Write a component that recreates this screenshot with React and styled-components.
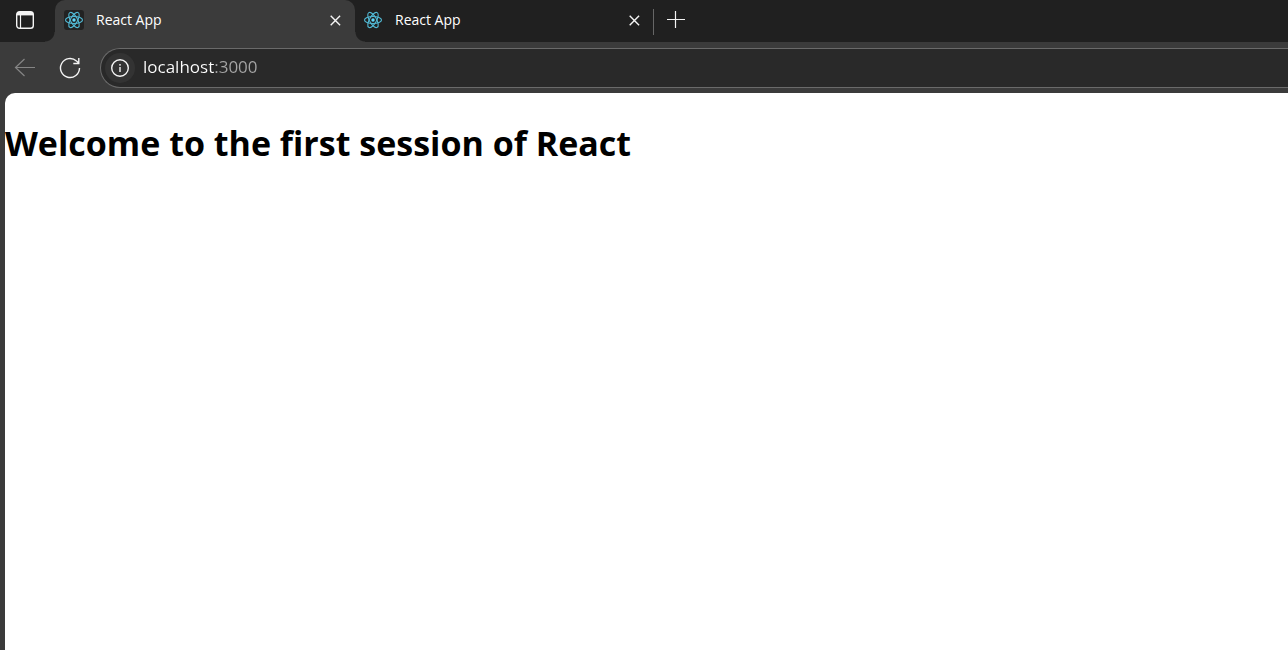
import React from "react";
import styled, { createGlobalStyle } from "styled-components";

const GlobalStyle = createGlobalStyle`
  * { box-sizing: border-box; }
  body {
    margin: 0;
    background: #3b3b3b;
    font-family: "Open Sans", "Noto Sans", sans-serif;
  }
`;

const Window = styled.div`
  display: flex;
  flex-direction: column;
  min-height: 100vh;
  overflow: hidden;
`;

const TabStrip = styled.header`
  display: flex;
  height: 42px;
  padding-left: 10px;
  background: #202020;
`;

const Tabs = styled.div`
  display: flex;
  margin-left: 15px;
`;

const IconButton = styled.button`
  display: flex;
  align-items: center;
  justify-content: center;
  flex: none;
  width: ${(p) => p.$width || 20}px;
  height: ${(p) => p.$height || 40}px;
  padding: 0;
  border: 0;
  background: ${(p) => p.$fill || "transparent"};
  border-radius: ${(p) => (p.$round ? "50%" : "0")};
  color: ${(p) => p.$color || "#f4f4f4"};
`;

const Tab = styled.div`
  position: relative;
  display: flex;
  align-items: center;
  flex: none;
  width: ${(p) => (p.$active ? 300 : 298)}px;
  height: 42px;
  padding: ${(p) => (p.$active ? "0 8px 2px 9px" : "0 7px 2px 8px")};
  border-radius: 10px 10px 0 0;
  background: ${(p) => (p.$active ? "#3b3b3b" : "transparent")};

  &::before,
  &::after {
    content: "";
    display: ${(p) => (p.$active ? "block" : "none")};
    position: absolute;
    bottom: 0;
    width: 10px;
    height: 10px;
  }
  &::before {
    right: 100%;
    background: radial-gradient(circle at 0 0, transparent 9px, #3b3b3b 10px);
  }
  &::after {
    left: 100%;
    background: radial-gradient(circle at 100% 0, transparent 9px, #3b3b3b 10px);
  }
`;

const Favicon = styled.span`
  display: flex;
  flex: none;
  width: 20px;
  height: 20px;
  border-radius: 3px;
  background: ${(p) => (p.$active ? "#222222" : "transparent")};
`;

const TabTitle = styled.span`
  flex: 1;
  margin-left: 12px;
  font-size: 14px;
  line-height: 20px;
  color: #ffffff;
`;

const Divider = styled.span`
  width: 1px;
  height: 26px;
  margin: 9px 12px 0 0;
  background: #666666;
`;

const Toolbar = styled.nav`
  display: flex;
  align-items: center;
  gap: 15px;
  height: 51px;
  padding-left: 10px;
  background: #3b3b3b;
`;

const AddressBar = styled.form`
  display: flex;
  align-items: center;
  flex: 1;
  height: 40px;
  padding-left: 4px;
  border: solid #6a6a6a;
  border-width: 1px 0 1px 1px;
  border-radius: 20px 0 0 20px;
  background: #292929;
`;

const AddressInput = styled.input`
  flex: 1;
  min-width: 0;
  height: 30px;
  margin-left: 8px;
  padding: 0 0 2px;
  border: 0;
  outline: 0;
  font: 17px/28px "Open Sans", "Noto Sans", sans-serif;
  color: transparent;
  background: linear-gradient(to right, #ffffff 72px, #a6a6a6 72px);
  background-clip: text;
  -webkit-background-clip: text;
`;

const Page = styled.main`
  flex: 1;
  margin-left: 5px;
  border-top-left-radius: 10px;
  background: #ffffff;
`;

const Heading = styled.h1`
  margin: 26px 0;
  font-size: 34px;
  line-height: 48px;
  font-weight: 700;
  color: #000000;
`;

const ReactIcon = () => (
  <svg width="20" height="20" viewBox="0 0 20 20" fill="none" stroke="#52b9d4" strokeWidth="1.1" aria-hidden="true">
    <ellipse cx="10" cy="10" rx="8.5" ry="3.5" />
    <ellipse cx="10" cy="10" rx="8.5" ry="3.5" transform="rotate(60 10 10)" />
    <ellipse cx="10" cy="10" rx="8.5" ry="3.5" transform="rotate(120 10 10)" />
    <circle cx="10" cy="10" r="1.7" fill="#61dafb" stroke="none" />
  </svg>
);

const CloseIcon = () => (
  <svg width="20" height="20" viewBox="0 0 20 20" fill="none" stroke="currentColor" strokeWidth="1.4" aria-hidden="true">
    <path d="M5.7 5.8l9.4 9.4M15.1 5.8l-9.4 9.4" />
  </svg>
);

const PanelIcon = () => (
  <svg width="20" height="20" viewBox="0 0 20 20" fill="none" stroke="currentColor" aria-hidden="true">
    <rect x="1.7" y="1.7" width="16.6" height="16.6" rx="2.8" strokeWidth="1.4" />
    <path d="M2 3.7h16" strokeWidth="3.4" />
    <path d="M5.5 5v13" strokeWidth="1.2" />
  </svg>
);

const PlusIcon = () => (
  <svg width="20" height="20" viewBox="0 0 20 20" fill="none" stroke="currentColor" strokeWidth="1.2" aria-hidden="true">
    <path d="M1 9.5h18M9.5 1v17" />
  </svg>
);

const BackIcon = () => (
  <svg width="22" height="22" viewBox="0 0 22 22" fill="none" stroke="currentColor" strokeWidth="1.2" aria-hidden="true">
    <path d="M21 10.5H1.5M10.5 2L1.5 10.5l9 8.5" />
  </svg>
);

const ReloadIcon = () => (
  <svg width="22" height="22" viewBox="0 0 22 22" fill="none" stroke="currentColor" strokeWidth="1.4" aria-hidden="true">
    <path d="M20.5 11a9.5 9.5 0 1 1-3-6.9L20 6.3M19.8 1v5.5h-5.5" />
  </svg>
);

const InfoIcon = () => (
  <svg width="20" height="20" viewBox="0 0 20 20" fill="none" stroke="currentColor" aria-hidden="true">
    <circle cx="10" cy="10" r="8.3" strokeWidth="1.4" />
    <path d="M10 9v5" strokeWidth="1.4" />
    <circle cx="10" cy="6.8" r="0.9" fill="currentColor" stroke="none" />
  </svg>
);

const BrowserTab = ({ active, title }) => (
  <Tab $active={active}>
    <Favicon $active={active}>
      <ReactIcon />
    </Favicon>
    <TabTitle>{title}</TabTitle>
    <IconButton type="button" aria-label="Close tab" $width={24}>
      <CloseIcon />
    </IconButton>
  </Tab>
);

export default function App() {
  return (
    <>
      <GlobalStyle />
      <Window>
        <TabStrip>
          <IconButton type="button" aria-label="Tab actions" $width={30}>
            <PanelIcon />
          </IconButton>
          <Tabs>
            <BrowserTab active title="React App" />
            <BrowserTab title="React App" />
          </Tabs>
          <Divider />
          <IconButton type="button" aria-label="New tab" $width={20}>
            <PlusIcon />
          </IconButton>
        </TabStrip>
        <Toolbar aria-label="Navigation">
          <IconButton type="button" aria-label="Back" $width={30} $color="#858585">
            <BackIcon />
          </IconButton>
          <IconButton type="button" aria-label="Reload" $width={30}>
            <ReloadIcon />
          </IconButton>
          <AddressBar onSubmit={(e) => e.preventDefault()}>
            <IconButton type="button" aria-label="Site information" $width={30} $height={30} $round $fill="#333333">
              <InfoIcon />
            </IconButton>
            <AddressInput aria-label="Address" defaultValue="localhost:3000" spellCheck={false} />
          </AddressBar>
        </Toolbar>
        <Page>
          <Heading>Welcome to the first session of React</Heading>
        </Page>
      </Window>
    </>
  );
}
